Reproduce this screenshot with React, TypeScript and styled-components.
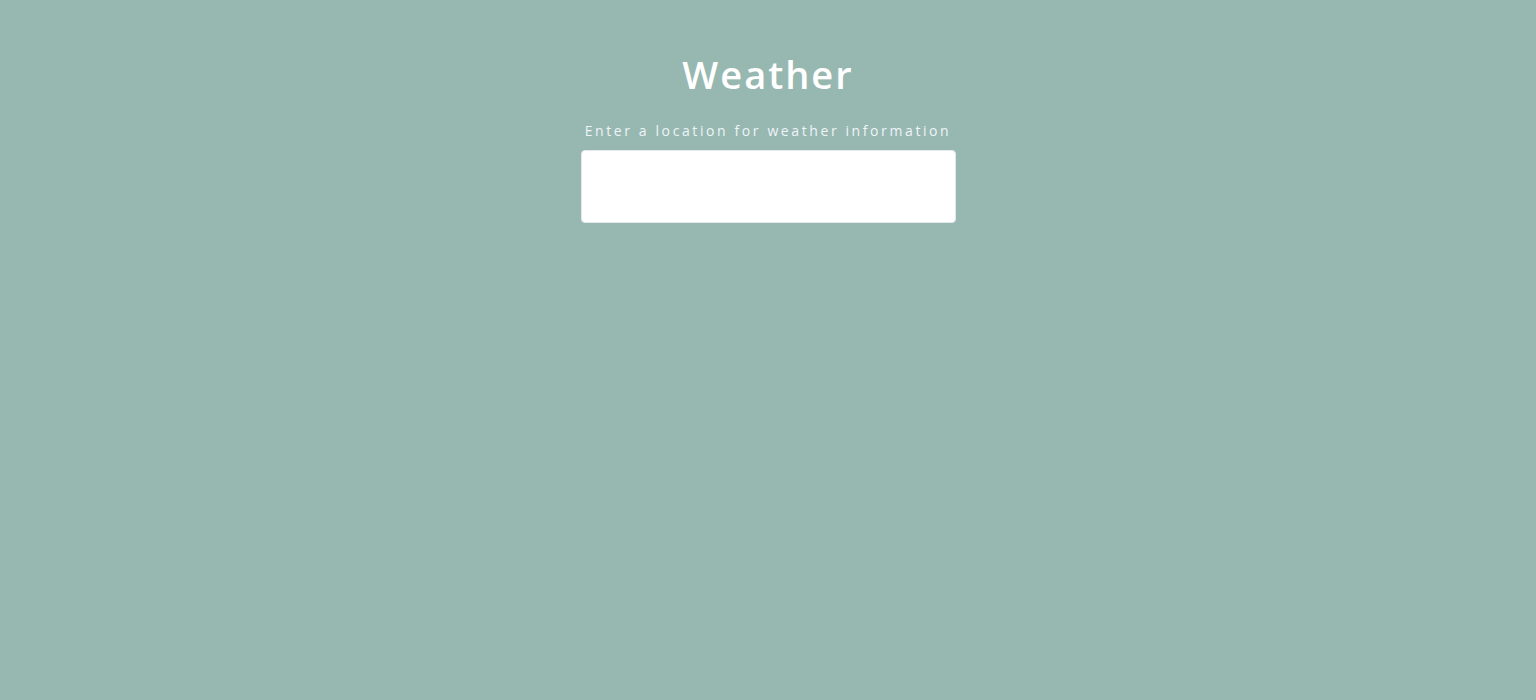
import styled, { createGlobalStyle } from "styled-components";

const GlobalStyle = createGlobalStyle`
  html, body {
    margin: 0;
    padding: 0;
    height: 100%;
    background: #97b8b1;
  }
  #root {
    min-height: 100vh;
  }
`;

export default function App() {
  return (
    <>
      <GlobalStyle />
      <Page>
        <Title>Weather</Title>
        <Label htmlFor="location">Enter a location for weather information</Label>
        <LocationInput id="location" type="text" />
      </Page>
    </>
  );
}

const Page = styled.div`
  min-height: 100vh;
  display: flex;
  flex-direction: column;
  align-items: center;
  padding-top: 48px;
  box-sizing: border-box;
  font-family: "Open Sans", "Noto Sans", sans-serif;
  background: #97b8b1;
`;

const Title = styled.h1`
  margin: 0;
  font-size: 38px;
  font-weight: 600;
  letter-spacing: 2px;
  color: #ffffff;
  line-height: 52px;
`;

const Label = styled.label`
  margin-top: 22px;
  font-size: 14px;
  letter-spacing: 2.6px;
  color: #eef4f8;
  line-height: 18px;
`;

const LocationInput = styled.input`
  margin-top: 10px;
  width: 375px;
  height: 73px;
  box-sizing: border-box;
  border: 1px solid #e4e8ee;
  border-radius: 4px;
  background: #ffffff;
  font-family: inherit;
  font-size: 18px;
  padding: 0 12px;
  outline: none;
`;
